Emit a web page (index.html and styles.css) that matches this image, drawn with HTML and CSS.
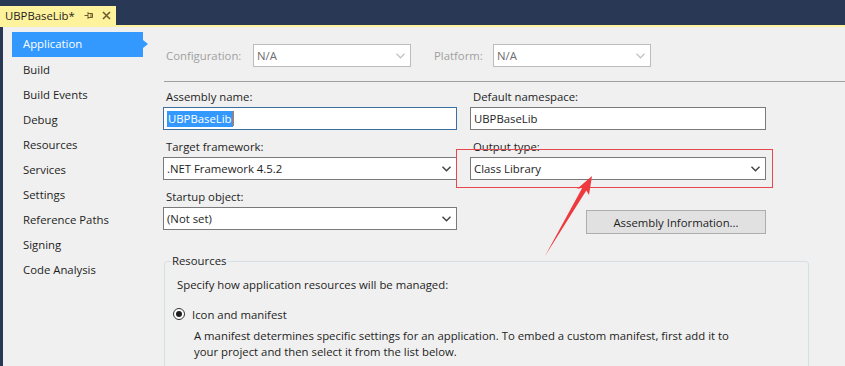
FILE: index.html
```html
<!DOCTYPE html>
<html>
<head>
<meta charset="utf-8">
<link rel="stylesheet" href="styles.css">
</head>
<body>
<div class="page">
  <div class="topbar">
    <div class="tab">
      <span class="tab-title">UBPBaseLib*</span>
      <svg class="pin" width="10" height="9" viewBox="0 0 10 9"><path d="M0.5 4.5H4M4 1V8M4 2.5H8.5V6.5H4M7 2.5V6.5" stroke="#6b5e2c" stroke-width="1" fill="none"/></svg>
      <svg class="close" width="9" height="9" viewBox="0 0 9 9"><path d="M1 1L8 8M8 1L1 8" stroke="#6b5e2c" stroke-width="1.6" fill="none"/></svg>
    </div>
  </div>
  <div class="tabline"></div>
  <div class="main">
    <nav class="sidebar">
      <div class="nav-item active">Application</div>
      <div class="nav-item">Build</div>
      <div class="nav-item">Build Events</div>
      <div class="nav-item">Debug</div>
      <div class="nav-item">Resources</div>
      <div class="nav-item">Services</div>
      <div class="nav-item">Settings</div>
      <div class="nav-item">Reference Paths</div>
      <div class="nav-item">Signing</div>
      <div class="nav-item">Code Analysis</div>
    </nav>
    <section class="content">
      <div class="config-row">
        <span class="cfg-label cfg-label-1">Configuration:</span>
        <div class="select disabled cfg-select"><span>N/A</span><svg class="chev" width="9" height="6" viewBox="0 0 9 6"><path d="M0.5 0.8L4.5 4.8L8.5 0.8" stroke="#c4c4c4" stroke-width="1.3" fill="none"/></svg></div>
        <span class="cfg-label cfg-label-2">Platform:</span>
        <div class="select disabled cfg-select"><span>N/A</span><svg class="chev" width="9" height="6" viewBox="0 0 9 6"><path d="M0.5 0.8L4.5 4.8L8.5 0.8" stroke="#c4c4c4" stroke-width="1.3" fill="none"/></svg></div>
      </div>
      <div class="sep"></div>
      <div class="form-grid">
        <div class="field">
          <label class="field-label">Assembly name:</label>
          <div class="input focused"><span class="sel">UBPBaseLib</span><span class="caret"></span></div>
        </div>
        <div class="field">
          <label class="field-label">Default namespace:</label>
          <div class="input"><span>UBPBaseLib</span></div>
        </div>
        <div class="field">
          <label class="field-label">Target framework:</label>
          <div class="select"><span>.NET Framework 4.5.2</span><svg class="chev" width="9" height="6" viewBox="0 0 9 6"><path d="M0.5 0.8L4.5 4.8L8.5 0.8" stroke="#404040" stroke-width="1.4" fill="none"/></svg></div>
        </div>
        <div class="field">
          <label class="field-label">Output type:</label>
          <div class="select"><span>Class Library</span><svg class="chev" width="9" height="6" viewBox="0 0 9 6"><path d="M0.5 0.8L4.5 4.8L8.5 0.8" stroke="#404040" stroke-width="1.4" fill="none"/></svg></div>
        </div>
        <div class="field">
          <label class="field-label">Startup object:</label>
          <div class="select"><span>(Not set)</span><svg class="chev" width="9" height="6" viewBox="0 0 9 6"><path d="M0.5 0.8L4.5 4.8L8.5 0.8" stroke="#404040" stroke-width="1.4" fill="none"/></svg></div>
        </div>
        <div class="field field-button">
          <button class="btn">Assembly Information...</button>
        </div>
      </div>
      <fieldset class="group">
        <legend>Resources</legend>
        <p class="group-intro">Specify how application resources will be managed:</p>
        <div class="radio-row">
          <span class="radio"><span class="dot"></span></span>
          <span>Icon and manifest</span>
        </div>
        <p class="desc">A manifest determines specific settings for an application. To embed a custom manifest, first add it to<br>your project and then select it from the list below.</p>
      </fieldset>
    </section>
  </div>
  <div class="highlight-box"></div>
  <svg class="annot-arrow" width="845" height="366" viewBox="0 0 845 366">
    <polygon points="592,176 589,195 586.3,190.5 545,256 582.3,187.8 577,189" fill="#ee3a3f"/>
  </svg>
</div>
</body>
</html>
```

FILE: styles.css
```css
* { box-sizing: border-box; }
html, body { margin: 0; padding: 0; }
body {
  width: 845px;
  height: 366px;
  overflow: hidden;
  background: #f0f0f0;
  font-family: "Open Sans", "Noto Sans", sans-serif;
  font-size: 11.35px;
  color: #1e1e1e;
}
.page { position: relative; width: 845px; height: 366px; overflow: hidden; }

.topbar {
  height: 25px;
  background: #293955;
  display: flex;
  align-items: flex-end;
}
.tab {
  width: 116px;
  height: 19px;
  background: #fff29d;
  display: flex;
  align-items: center;
  padding-left: 5px;
  color: #1e1e1e;
}
.tab-title { line-height: 19px; }
.pin { margin-left: 9px; }
.close { margin-left: 8px; }
.tabline { height: 2px; background: #fff29d; }

.main {
  display: flex;
  height: 339px;
  overflow: hidden;
  border-left: 3px solid #293955;
}
.sidebar {
  width: 160px;
  flex: none;
  padding: 5px 0 0 9px;
}
.nav-item {
  height: 25px;
  line-height: 25px;
  padding-left: 11px;
  width: 131px;
  position: relative;
}
.nav-item.active {
  background: #3399ff;
  color: #fff;
  line-height: 24px;
}
.nav-item.active::after {
  content: "";
  position: absolute;
  right: -5px;
  top: 8px;
  border-left: 5px solid #3399ff;
  border-top: 4.5px solid transparent;
  border-bottom: 4.5px solid transparent;
}

.content { flex: 1; min-width: 0; }

.config-row {
  display: flex;
  align-items: center;
  margin-top: 17px;
  height: 23px;
}
.cfg-label { color: #a0a0a0; }
.cfg-label-1 { width: 90px; padding-left: 3px; }
.cfg-label-2 { width: 59px; margin-left: 23px; }
.cfg-select { width: 158px; }

.select, .input {
  height: 23px;
  background: #fff;
  border: 1px solid #7a7a7a;
  display: flex;
  align-items: center;
  padding-left: 3px;
  padding-right: 5px;
}
.select span, .input span { flex: 1; }
.select.disabled { border-color: #bcbcbc; color: #6d6d6d; }
.select.disabled span { color: #6d6d6d; }
.chev { flex: none; }

.sep {
  height: 1px;
  background: #a0a0a0;
  margin: 14px 0 0 1px;
}

.form-grid {
  display: grid;
  grid-template-columns: 294px 296px;
  column-gap: 13px;
  row-gap: 9px;
  margin-top: 7px;
}
.field { display: flex; flex-direction: column; }
.field-label {
  height: 16px;
  line-height: 16px;
  padding-left: 3px;
  margin-bottom: 2px;
}
.input.focused { border-color: #3c6f9f; }
.input .sel {
  flex: none;
  background: #3399ff;
  color: #fff;
  line-height: 16px;
  padding: 0 1px;
}
.caret { flex: none !important; width: 1px; height: 15px; background: #e07020; }

.field-button { align-items: flex-end; padding-top: 21px; }
.btn {
  width: 180px;
  height: 24px;
  background: #e1e1e1;
  border: 1px solid #adadad;
  font: inherit;
  color: #1e1e1e;
  padding: 0;
}

.group {
  margin: 19px 0 0 1px;
  width: 645px;
  height: 130px;
  border: 1px solid #d5dfe5;
  border-radius: 3px;
  padding: 0;
}
.group legend {
  margin-left: 6px;
  padding: 0 2px 0 1px;
  line-height: 16px;
}
.group-intro {
  margin: 8px 0 0 12px;
  line-height: 16px;
}
.radio-row {
  display: flex;
  align-items: center;
  margin: 13px 0 0 8px;
  height: 16px;
}
.radio {
  width: 12px;
  height: 12px;
  border: 1px solid #333;
  border-radius: 50%;
  background: #fff;
  display: flex;
  align-items: center;
  justify-content: center;
  margin-right: 7px;
}
.dot { width: 6px; height: 6px; border-radius: 50%; background: #1e1e1e; }
.desc {
  margin: 6px 0 0 29px;
  line-height: 16px;
}

.highlight-box {
  position: absolute;
  left: 456px;
  top: 149px;
  width: 317px;
  height: 39px;
  border: 1px solid #e8474d;
}
.annot-arrow {
  position: absolute;
  left: 0;
  top: 0;
  pointer-events: none;
}
```
